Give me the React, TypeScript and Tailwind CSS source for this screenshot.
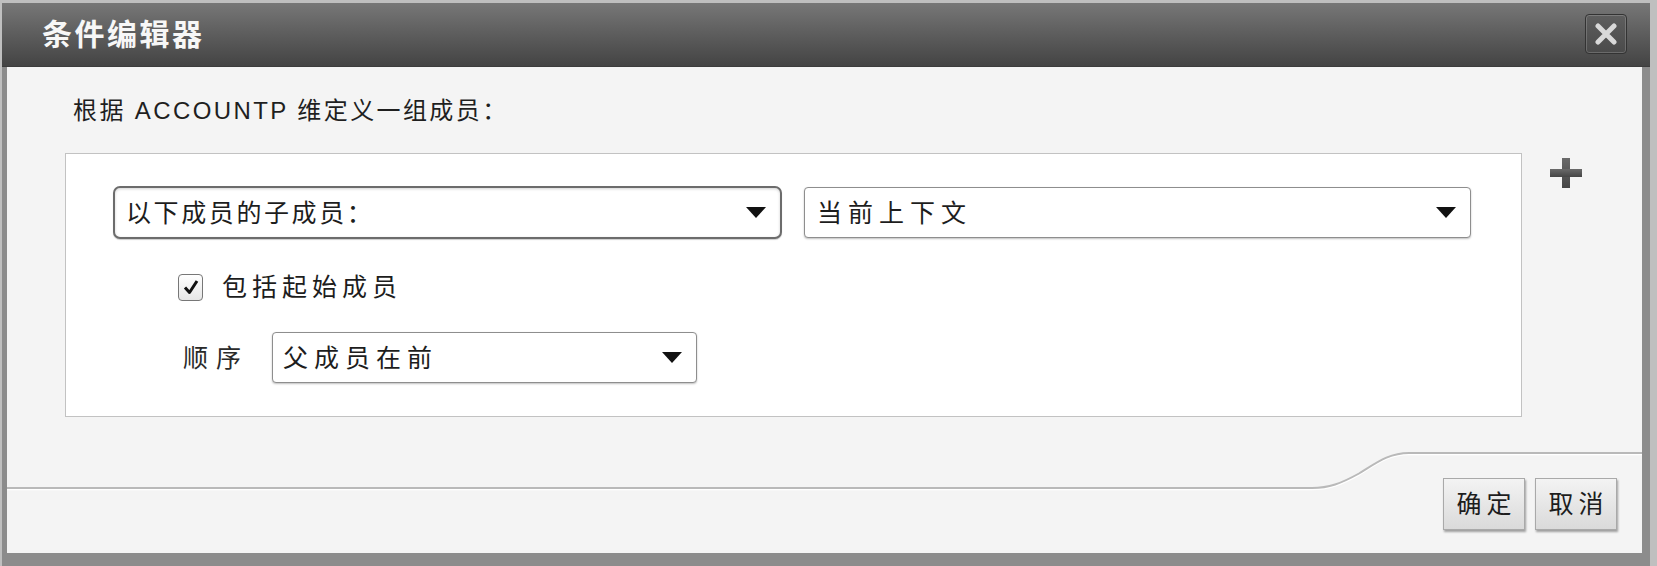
import React from 'react'

const font = "font-[family-name:'Liberation_Sans','Noto_Sans_CJK_SC',sans-serif]"

const Arrow = () => (
  <svg width="20" height="11" viewBox="0 0 20 11" className="shrink-0">
    <polygon points="0,0 20,0 10,11" fill="#111" />
  </svg>
)

type SelectProps = {
  value: string
  className: string
  tracking: string
}

const Select: React.FC<SelectProps> = ({ value, className, tracking }) => (
  <div className={`flex items-center justify-between bg-white pr-[14px] ${className}`}>
    <span className={`text-[25px] leading-[30px] text-[#1d1d1d] ${tracking}`}>{value}</span>
    <Arrow />
  </div>
)

const App: React.FC = () => {
  return (
    <div className={`w-[1657px] h-[566px] bg-[#bfbfbf] pt-[3px] pl-[2px] overflow-hidden ${font}`}>
      <div className="w-[1648px] h-[563px] flex flex-col">
        {/* Title bar */}
        <div className="h-[64px] shrink-0 flex items-center justify-between bg-gradient-to-b from-[#777777] to-[#444444] border-b border-[#3c3c3c] pl-[40px] pr-[23px]">
          <span className="text-[30px] leading-[36px] font-bold tracking-[2.5px] text-[#f7f7f7]">条件编辑器</span>
          <div className="w-[42px] h-[40px] mt-[-2px] rounded-[4px] border border-[#333] bg-gradient-to-b from-[#5e5e5e] to-[#4a4a4a] shadow-[inset_0_0_0_1px_rgba(255,255,255,0.18)] flex items-center justify-center">
            <svg width="24" height="22" viewBox="0 0 24 22">
              <path d="M4 3 L20 19 M20 3 L4 19" stroke="#d9d9d9" strokeWidth="5" strokeLinecap="round" />
            </svg>
          </div>
        </div>

        {/* Body frame */}
        <div className="flex-1 bg-[#8c8c8c] pl-[5px] pr-[8px] pb-[13px] flex">
          <div className="flex-1 bg-[#f4f4f4] flex flex-col">
            <div className="pt-[28px] pl-[66px] h-[60px] text-[24px] leading-[32px] tracking-[2.4px] text-[#1f1f1f]">
              根据 ACCOUNTP 维定义一组成员：
            </div>

            <div className="mt-[26px] flex items-start">
              {/* Condition panel */}
              <div className="ml-[58px] w-[1457px] h-[264px] bg-white border border-[#c2c2c2] pt-[32px]">
                <div className="flex items-center pl-[47px] gap-[22px]">
                  <Select
                    value="以下成员的子成员："
                    tracking="tracking-[2.6px]"
                    className="w-[669px] h-[53px] rounded-[7px] border-2 border-[#6c6c6c] pl-[11px] shadow-[inset_0_1px_3px_rgba(0,0,0,0.18),0_1px_1px_rgba(0,0,0,0.2)]"
                  />
                  <Select
                    value="当前上下文"
                    tracking="tracking-[6px]"
                    className="w-[667px] h-[51px] rounded-[4px] border border-[#8e8e8e] pl-[12px] shadow-[0_1px_2px_rgba(0,0,0,0.25)]"
                  />
                </div>

                <div className="mt-[35px] flex items-center pl-[112px] h-[26px]">
                  <div className="w-[25px] h-[27px] rounded-[4px] border-[1.5px] border-[#777] bg-gradient-to-b from-white to-[#e6e6e6] flex items-center justify-center">
                    <svg width="18" height="18" viewBox="0 0 18 18">
                      <path d="M3 9.5 L7.5 14.5 L15 3" stroke="#111" strokeWidth="3" fill="none" strokeLinejoin="round" />
                    </svg>
                  </div>
                  <span className="ml-[19px] text-[25px] leading-[30px] tracking-[5px] text-[#1d1d1d]">包括起始成员</span>
                </div>

                <div className="mt-[32px] flex items-center pl-[117px]">
                  <span className="w-[89px] text-[25px] leading-[30px] tracking-[8px] text-[#2a2a2a]">顺序</span>
                  <Select
                    value="父成员在前"
                    tracking="tracking-[6px]"
                    className="w-[425px] h-[51px] rounded-[4px] border border-[#8e8e8e] pl-[10px] shadow-[0_1px_2px_rgba(0,0,0,0.25)]"
                  />
                </div>
              </div>

              {/* Add button */}
              <div className="ml-[28px] mt-[5px]">
                <svg width="32" height="30" viewBox="0 0 32 30">
                  <defs>
                    <linearGradient id="plusFill" x1="0" y1="0" x2="0" y2="1">
                      <stop offset="0" stopColor="#6a6a6a" />
                      <stop offset="1" stopColor="#454545" />
                    </linearGradient>
                  </defs>
                  <rect x="12" y="0" width="8" height="30" fill="url(#plusFill)" />
                  <rect x="0" y="11" width="32" height="8" fill="url(#plusFill)" />
                </svg>
              </div>
            </div>

            {/* Footer */}
            <div className="relative flex-1 flex items-end justify-end gap-[10px] pr-[25px] pb-[23px]">
              <svg className="absolute inset-0" width="1635" height="136" viewBox="0 0 1635 136">
                <path d="M0 72.5 H1305 C1322 72.5 1334 68 1352 58 C1370 47 1382 37.5 1402 37.5 H1635" stroke="#ffffff" strokeWidth="1.5" fill="none" />
                <path d="M0 71 H1305 C1322 71 1334 66.5 1352 56.5 C1370 45.5 1382 36 1402 36 H1635" stroke="#b9b9b9" strokeWidth="2" fill="none" />
              </svg>
              <button className="relative w-[82px] h-[52px] pl-[5px] border border-[#a9a9a9] bg-gradient-to-b from-[#f3f3f3] to-[#dadada] shadow-[1px_2px_2px_rgba(0,0,0,0.35)] text-[25px] leading-[30px] tracking-[5px] text-[#1d1d1d]">
                确定
              </button>
              <button className="relative w-[82px] h-[52px] pl-[5px] border border-[#a9a9a9] bg-gradient-to-b from-[#f3f3f3] to-[#dadada] shadow-[1px_2px_2px_rgba(0,0,0,0.35)] text-[25px] leading-[30px] tracking-[5px] text-[#1d1d1d]">
                取消
              </button>
            </div>
          </div>
        </div>
      </div>
    </div>
  )
}

export default App
